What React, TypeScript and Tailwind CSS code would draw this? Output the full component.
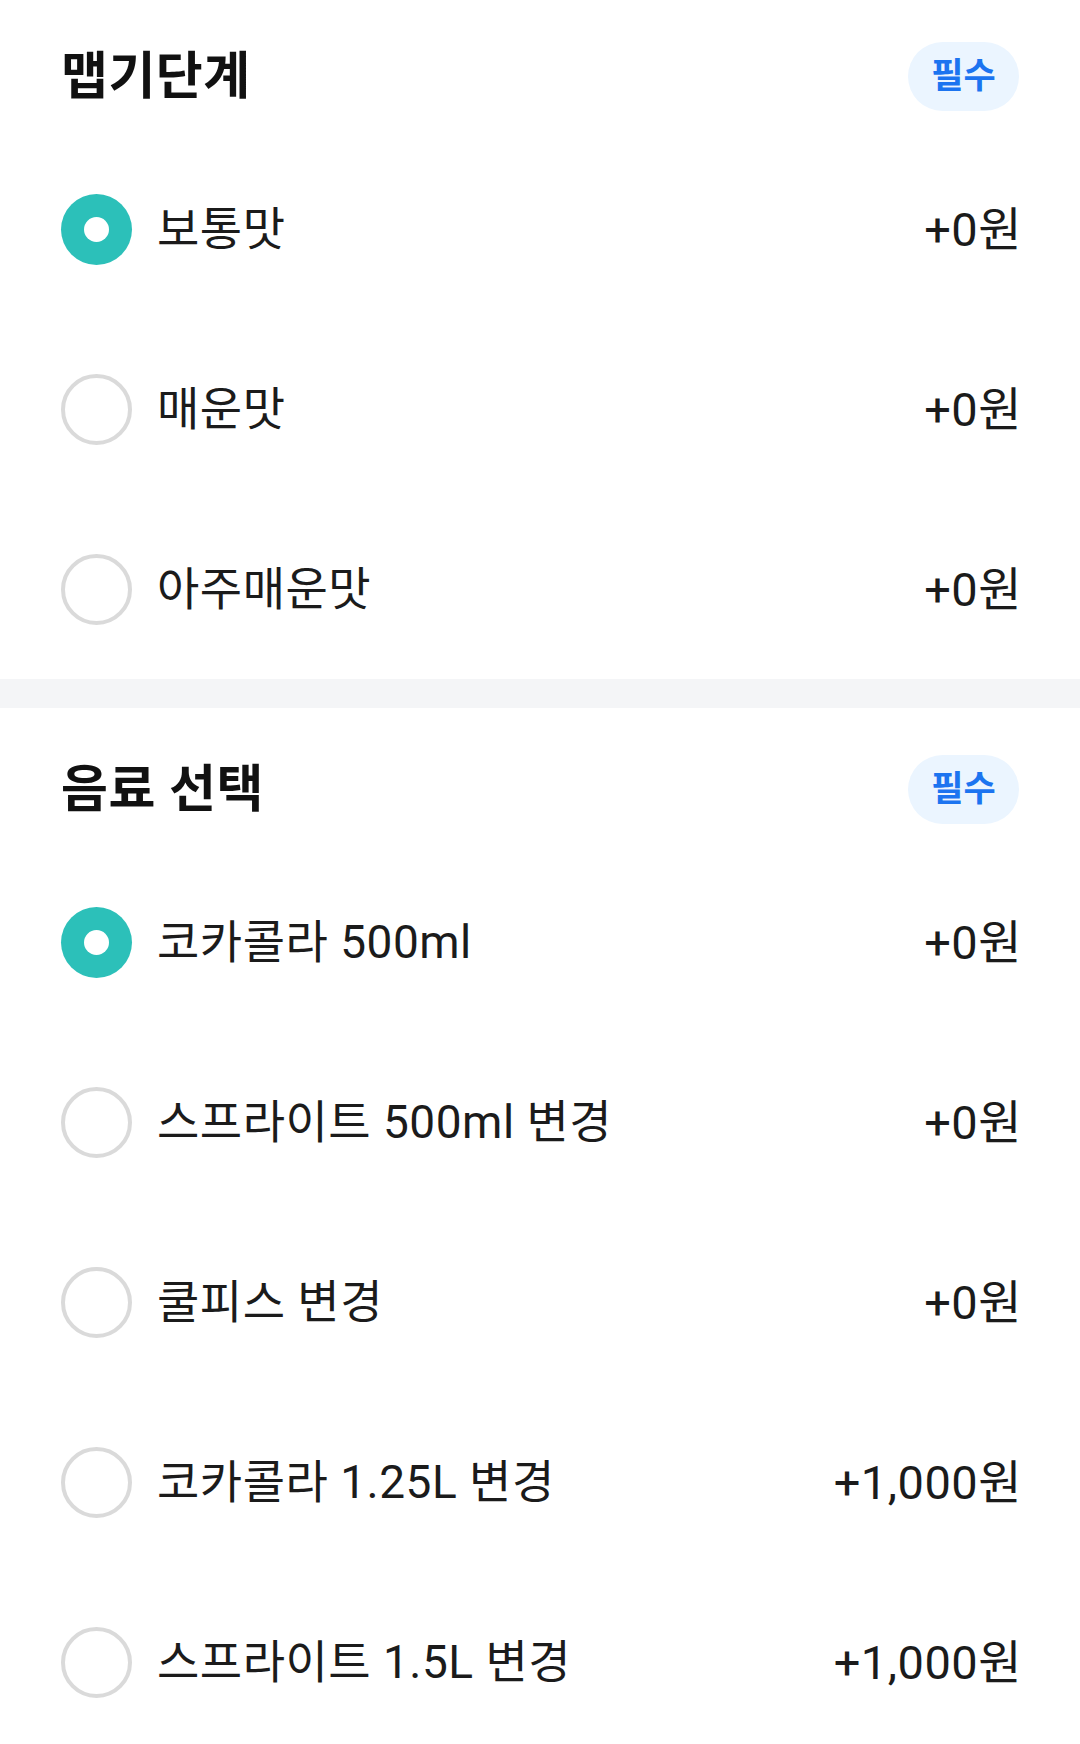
import React from "react";

type Option = { label: string; price: string; selected?: boolean };

const sections: { title: string; options: Option[]; pt: string }[] = [
  {
    title: "맵기단계",
    pt: "pt-[42px]",
    options: [
      { label: "보통맛", price: "+0원", selected: true },
      { label: "매운맛", price: "+0원" },
      { label: "아주매운맛", price: "+0원" },
    ],
  },
  {
    title: "음료 선택",
    pt: "pt-[47px]",
    options: [
      { label: "코카콜라 500ml", price: "+0원", selected: true },
      { label: "스프라이트 500ml 변경", price: "+0원" },
      { label: "쿨피스 변경", price: "+0원" },
      { label: "코카콜라 1.25L 변경", price: "+1,000원" },
      { label: "스프라이트 1.5L 변경", price: "+1,000원" },
    ],
  },
];

function Radio({ selected }: { selected?: boolean }) {
  if (selected) {
    return (
      <div className="w-[71px] h-[71px] rounded-full bg-[#2cc0b9] flex items-center justify-center shrink-0">
        <div className="w-[25px] h-[25px] rounded-full bg-white" />
      </div>
    );
  }
  return <div className="w-[71px] h-[71px] rounded-full border-[4px] border-[#dadada] shrink-0" />;
}

export default function App() {
  return (
    <div
      className="w-[1080px] h-[1744px] overflow-hidden bg-white"
      style={{ fontFamily: '"Roboto", "Noto Sans CJK KR", sans-serif' }}
    >
      {sections.map((s, si) => (
        <React.Fragment key={s.title}>
          {si > 0 && <div className="h-[29px] bg-[#f4f5f7]" />}
          <section className={`px-[61px] ${s.pt}`}>
            <div className="flex items-center justify-between h-[69px]">
              <h2 className="text-[51px] font-bold text-[#111111] leading-none tracking-[0.5px]">
                {s.title}
              </h2>
              <span className="w-[111px] h-[69px] rounded-full bg-[#ebf5ff] text-[#1c74f0] text-[35px] font-bold flex items-center justify-center leading-none">
                필수
              </span>
            </div>
            <div className="pt-[28px]">
              {s.options.map((o) => (
                <div key={o.label} className="h-[180px] flex items-center">
                  <Radio selected={o.selected} />
                  <span className="ml-[25px] text-[46px] tracking-[0.5px] text-[#1b1b1b] leading-none">
                    {o.label}
                  </span>
                  <span className="ml-auto -mr-[3px] text-[47px] tracking-[0.5px] text-[#1b1b1b] leading-none">
                    {o.price}
                  </span>
                </div>
              ))}
            </div>
          </section>
        </React.Fragment>
      ))}
    </div>
  );
}
